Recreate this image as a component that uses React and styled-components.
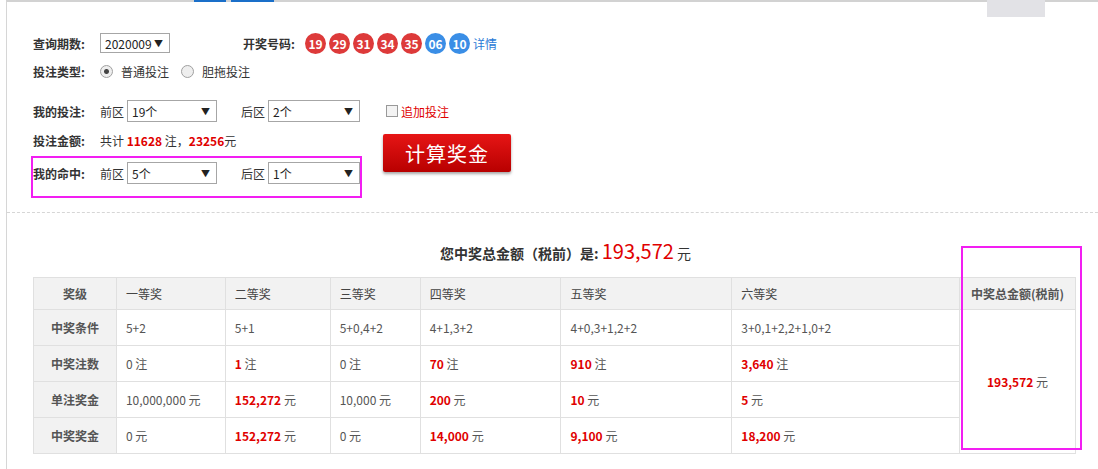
import React from 'react';
import styled, { createGlobalStyle } from 'styled-components';

const Global = createGlobalStyle`
  body { margin: 0; background: #fff; font-family: "Noto Sans CJK SC", "Liberation Sans", sans-serif; font-size: 12px; color: #333; }
`;

const Page = styled.div`
  position: relative;
  margin-left: 6px;
  height: 469px;
  border-left: 1px solid #d6d6d6;
  border-top: 2px solid #d2d2d2;
  box-sizing: border-box;
`;

const TabMark = styled.div`
  position: absolute;
  top: -2px;
  left: ${p => p.$left}px;
  width: ${p => p.$w}px;
  height: 2px;
  background: #1a6fc9;
`;

const GreyBtn = styled.div`
  position: absolute;
  top: -2px;
  right: 53px;
  width: 58px;
  height: 17px;
  background: #e2e2e6;
`;

const Form = styled.div`
  padding: 28px 0 0 26px;
  height: 211px;
  border-bottom: 1px dashed #d6d6d6;
  box-sizing: border-box;
`;

const Row = styled.div`
  display: flex;
  align-items: center;
  height: ${p => p.$h || 26}px;
  margin-top: ${p => p.$mt || 0}px;
`;

const Label = styled.span`
  font-weight: bold;
  color: #333;
  width: ${p => p.$w || 67}px;
  flex-shrink: 0;
`;

const Select = styled.div`
  display: flex;
  align-items: center;
  justify-content: space-between;
  width: ${p => p.$w}px;
  height: ${p => p.$h || 20}px;
  border: 1px solid #a6a6a6;
  box-sizing: border-box;
  padding: 0 6px 0 4px;
  margin-left: ${p => p.$ml || 0}px;
  color: #222;
  &::after { content: "▼"; font-size: 9px; }
`;

const Ball = styled.span`
  width: 21px;
  height: 21px;
  border-radius: 50%;
  background: ${p => (p.$blue ? '#3a8ee6' : '#dd3a3a')};
  color: #fff;
  font-weight: bold;
  font-size: 12px;
  display: inline-flex;
  align-items: center;
  justify-content: center;
  margin-right: 3px;
`;

const Link = styled.span` color: #2a7ad6; `;

const Radio = styled.span`
  width: 11px;
  height: 11px;
  border-radius: 50%;
  border: 1px solid #a0a0a0;
  background: ${p => (p.$on ? 'radial-gradient(circle, #444 2px, #eee 3px)' : '#eee')};
  margin: 0 8px 0 ${p => p.$ml || 0}px;
`;

const Check = styled.span`
  width: 10px;
  height: 10px;
  border: 1px solid #999;
  background: #f3f3f3;
  margin: 0 3px 0 26px;
`;

const Red = styled.b` color: #e00000; `;
const RedText = styled.span` color: #e00000; `;
const Gap = styled.span` margin-left: ${p => p.$w}px; `;

const Split = styled.div`
  display: flex;
  align-items: flex-start;
`;

const Highlight = styled.div`
  border: 2px solid #f21ef2;
  margin-left: -2px;
  padding: 0 0 8px 0;
  width: 331px;
  box-sizing: border-box;
`;

const CalcBtn = styled.button`
  margin: 10px 0 0 21px;
  width: 128px;
  height: 38px;
  border: none;
  border-radius: 2px;
  background: linear-gradient(#e61515, #b80000);
  box-shadow: 0 2px 3px rgba(0,0,0,0.35);
  color: #fff;
  font-family: inherit;
  font-size: 20px;
  letter-spacing: 1px;
`;

const Result = styled.div`
  position: relative;
  padding: 23px 0 0 26px;
`;

const Total = styled.div`
  text-align: center;
  font-size: 14px;
  font-weight: bold;
  height: 26px;
  margin-left: 0;
  margin-bottom: 15px;
  span.big { color: #e00000; font-size: 20px; font-weight: normal; }
  span.yuan { font-weight: normal; font-size: 14px; }
`;

const Table = styled.table`
  border-collapse: collapse;
  width: 1043px;
  color: #555;
  td, th { border: 1px solid #e0e0e0; height: 35px; padding: 0 0 0 9px; text-align: left; font-weight: normal; }
  tr:not(:first-child) td { border-top: 1px dotted #d6d6d6; }
  th { background: #f2f2f2; height: 31px; color: #444; }
  th.head, td.head { background: #f2f2f2; font-weight: bold; color: #555; text-align: center; padding: 0; }
  td.sum { text-align: center; padding: 0; border-top: 1px solid #e0e0e0; }
  b { color: #e00000; }
`;

const SumBox = styled.div`
  position: absolute;
  top: 33px;
  right: 16px;
  width: 121px;
  height: 204px;
  border: 2px solid #f21ef2;
  box-sizing: border-box;
`;

const cols = [83, 109, 105, 90, 141, 171, 228, 116];
const rows = [
  ['中奖条件', ['5+2'], ['5+1'], ['5+0,4+2'], ['4+1,3+2'], ['4+0,3+1,2+2'], ['3+0,1+2,2+1,0+2']],
  ['中奖注数', ['0', '注'], ['1', '注', 1], ['0', '注'], ['70', '注', 1], ['910', '注', 1], ['3,640', '注', 1]],
  ['单注奖金', ['10,000,000', '元'], ['152,272', '元', 1], ['10,000', '元'], ['200', '元', 1], ['10', '元', 1], ['5', '元', 1]],
  ['中奖奖金', ['0', '元'], ['152,272', '元', 1], ['0', '元'], ['14,000', '元', 1], ['9,100', '元', 1], ['18,200', '元', 1]],
];

export default function App() {
  return (
    <Page>
      <Global />
      <TabMark $left={187} $w={32} />
      <TabMark $left={224} $w={43} />
      <GreyBtn />
      <Form>
        <Row>
          <Label>查询期数:</Label>
          <Select $w={70}>2020009</Select>
          <Gap $w={73} /><Label $w={62}>开奖号码:</Label>
          {['19', '29', '31', '34', '35'].map(n => <Ball key={n}>{n}</Ball>)}
          <Ball $blue>06</Ball><Ball $blue>10</Ball>
          <Link>详情</Link>
        </Row>
        <Row $h={30}>
          <Label>投注类型:</Label>
          <Radio $on />普通投注
          <Radio $ml={12} />胆拖投注
        </Row>
        <Row $mt={12}>
          <Label>我的投注:</Label>前区
          <Select $w={90} $h={22} $ml={3}>19个</Select>
          <Gap $w={24} />后区
          <Select $w={92} $h={22} $ml={3}>2个</Select>
          <Check /><RedText>追加投注</RedText>
        </Row>
        <Split>
          <div>
            <Row $h={32}>
              <Label>投注金额:</Label>共计&nbsp;<Red>11628</Red>&nbsp;注，<Red>23256</Red>元
            </Row>
            <Highlight>
              <Row $h={30}>
                <Label>我的命中:</Label>前区
                <Select $w={90} $h={22} $ml={3}>5个</Select>
                <Gap $w={24} />后区
                <Select $w={92} $h={22} $ml={3}>1个</Select>
              </Row>
            </Highlight>
          </div>
          <CalcBtn>计算奖金</CalcBtn>
        </Split>
      </Form>
      <Result>
        <Total>您中奖总金额（税前）是: <span className="big">193,572</span> <span className="yuan">元</span></Total>
        <Table>
          <colgroup>{cols.map((w, i) => <col key={i} style={{ width: w }} />)}</colgroup>
          <tbody>
            <tr>
              <th className="head">奖级</th>
              {['一等奖', '二等奖', '三等奖', '四等奖', '五等奖', '六等奖'].map(t => <th key={t}>{t}</th>)}
              <th className="head">中奖总金额(税前)</th>
            </tr>
            {rows.map((r, i) => (
              <tr key={r[0]}>
                <td className="head">{r[0]}</td>
                {r.slice(1).map(([v, u, hot], j) => (
                  <td key={j}>{hot ? <b>{v}</b> : v}{u ? ` ${u}` : ''}</td>
                ))}
                {i === 0 && <td className="sum" rowSpan={4}><b>193,572</b> 元</td>}
              </tr>
            ))}
          </tbody>
        </Table>
        <SumBox />
      </Result>
    </Page>
  );
}
